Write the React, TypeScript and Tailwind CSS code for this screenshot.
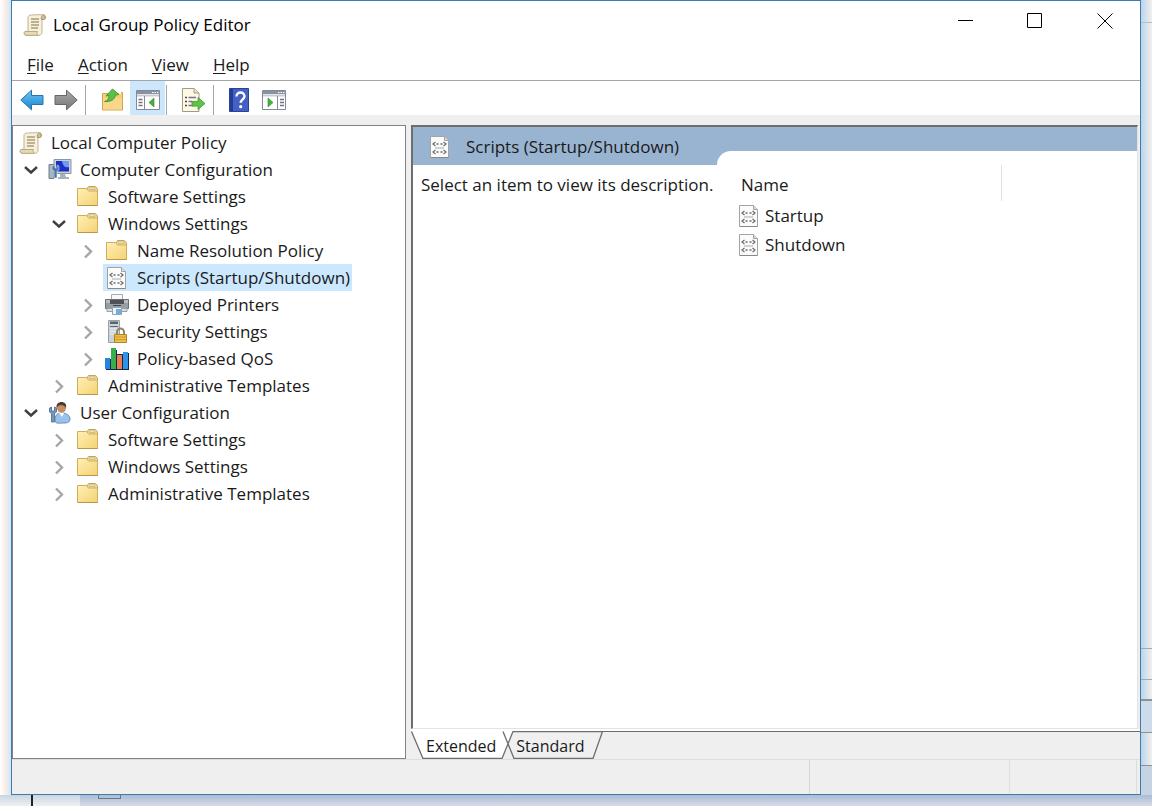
import React, { useState } from "react";

type IconName =
  | "scroll"
  | "computer"
  | "user"
  | "folder"
  | "script"
  | "printer"
  | "security"
  | "chart";

interface TreeItem {
  id: string;
  label: string;
  icon: IconName;
  level: number;
  open?: boolean;
}

const treeItems: TreeItem[] = [
  { id: "root", label: "Local Computer Policy", icon: "scroll", level: 0 },
  { id: "cc", label: "Computer Configuration", icon: "computer", level: 1, open: true },
  { id: "cc-soft", label: "Software Settings", icon: "folder", level: 2 },
  { id: "cc-win", label: "Windows Settings", icon: "folder", level: 2, open: true },
  { id: "cc-name", label: "Name Resolution Policy", icon: "folder", level: 3, open: false },
  { id: "cc-scripts", label: "Scripts (Startup/Shutdown)", icon: "script", level: 3 },
  { id: "cc-print", label: "Deployed Printers", icon: "printer", level: 3, open: false },
  { id: "cc-sec", label: "Security Settings", icon: "security", level: 3, open: false },
  { id: "cc-qos", label: "Policy-based QoS", icon: "chart", level: 3, open: false },
  { id: "cc-adm", label: "Administrative Templates", icon: "folder", level: 2, open: false },
  { id: "uc", label: "User Configuration", icon: "user", level: 1, open: true },
  { id: "uc-soft", label: "Software Settings", icon: "folder", level: 2, open: false },
  { id: "uc-win", label: "Windows Settings", icon: "folder", level: 2, open: false },
  { id: "uc-adm", label: "Administrative Templates", icon: "folder", level: 2, open: false },
];

const indents = ["pl-1", "pl-[10px]", "pl-[38px]", "pl-[67px]"];

const ScrollIcon = () => (
  <svg width="24" height="24" viewBox="0 0 24 24">
    <path d="M6 2.500c1-.8 14-1 15.500-.5 1.500.7 1.500 3 .3 4H19v13c0 2-1 3-3 3.300H3c-2-.3-2.300-3-.8-4H5V5c0-1 .2-2 1-2.500z" fill="#f6f0dc" stroke="#c2b592" />
    <path d="M2 18.500h12.500c-.8 1.500-.5 3 .8 3.800H3c-2-.3-2.300-2.800-1-3.800z" fill="#e6dab4" stroke="#b9aa82" />
    <path d="M18.500 6.500c-.8-2 .2-4.500 2-4.500s2 3.500.8 4.500z" fill="#d3c196" stroke="#a8966a" />
    <path d="M8 6h8M8 9h8M8 12h8M8 15h7" stroke="#a99c78" strokeWidth="1.300" />
  </svg>
);

const FolderIcon = () => (
  <svg width="24" height="24" viewBox="0 0 24 24">
    <defs>
      <linearGradient id="folderFill" x1="0" y1="0" x2="1" y2="1">
        <stop offset="0" stopColor="#fff0b4" />
        <stop offset="1" stopColor="#f5d274" />
      </linearGradient>
    </defs>
    <path d="M10.500 4.500 12.500 1.500h7l2 2.500v16h-11z" fill="#f3dc98" stroke="#c3a55c" />
    <path d="M13.500 3h5.500v1.500h-5.500z" fill="#fffdf2" stroke="#b79f66" strokeWidth=".6" />
    <path d="M1.500 3.500h9l2 2.500h9v14.500h-20z" fill="url(#folderFill)" stroke="#cfae5d" />
    <path d="M2 20.500h19.500" stroke="#b8964a" />
  </svg>
);

const ScriptIcon = () => (
  <svg width="24" height="24" viewBox="0 0 24 24">
    <path d="M2.500 1.500h14l4 4v17h-18z" fill="#fbfbfb" stroke="#a3a3a3" />
    <path d="M16.500 1.500v4h4" fill="#ddd" stroke="#a3a3a3" />
    <path d="M3 22.500h17.500" stroke="#888" />
    <path d="M7.500 7 5 9l2.500 2M15.500 7 18 9l-2.500 2M7.500 15 5 17l2.500 2M15.500 15l2.500 2-2.500 2" fill="none" stroke="#6b6b6b" strokeWidth="1.200" />
    <path d="M8.500 9h2m2 0h2M8.500 17h2m2 0h2" stroke="#6b6b6b" strokeWidth="1.300" />
    <path d="M7 13h9" stroke="#a9a9a9" />
  </svg>
);

const ComputerIcon = () => (
  <svg width="24" height="24" viewBox="0 0 24 24">
    <path d="M6 1.500h17v14H6z" fill="#c9d0d6" stroke="#8d979f" />
    <path d="M8 3h13v10.500H8z" fill="#1b2fc4" />
    <path d="M14 3h7v6c-3 1-6 0-7-6z" fill="#6d9bf0" />
    <path d="M12 16h5l1 3h3v2H10v-2h2z" fill="#aab2b8" />
    <path d="M1 6.500h5v14H1z" fill="#a8b4bf" stroke="#6f7e8b" />
    <path d="M4 8v4l2 1v7h3v-7l2-1V8L9 7v3H7V7z" fill="#4a76ad" stroke="#dae6f2" strokeWidth=".6" />
  </svg>
);

const UserIcon = () => (
  <svg width="24" height="24" viewBox="0 0 24 24">
    <path d="M7 20c0-6 2-8 7-8s8 3 8 6-2 4-6 4-9 1-9-2z" fill="#9cc1ea" stroke="#6490bf" />
    <path d="m11 12 3 4 2-4z" fill="#fff" />
    <circle cx="13.500" cy="7" r="4.500" fill="#c58d60" />
    <path d="M8.500 7c-.5-4 2-6 5-6s5.500 2 4.500 6c-1-2-3-3-5-3-2 0-3 1-4.500 3z" fill="#4c3b30" />
    <path d="M1.500 7v4l2 1.500V21h3v-8.500l2-1.500V7l-2-1v4h-3V6z" fill="#7896b8" stroke="#496a91" strokeWidth=".8" />
  </svg>
);

const PrinterIcon = () => (
  <svg width="24" height="24" viewBox="0 0 24 24">
    <path d="M6.500 1.500h11v6h-11z" fill="#f6f8f9" stroke="#a9aeb2" />
    <path d="M.5 6.500h23v9H.5z" fill="#999ea2" stroke="#6b7074" />
    <path d="M1 7h22v3H1z" fill="#b8bcbf" />
    <path d="M5 7h14v4H5z" fill="#4d5357" />
    <path d="M2 15.500h20v3H2z" fill="#dcdfe1" stroke="#9ba0a4" />
    <path d="M7.500 14.500h9v7h-9z" fill="#eef6fc" stroke="#8fa5b5" />
    <path d="M11 16h5v5h-5z" fill="#6fb0d8" />
    <path d="M8 12.500h8" stroke="#3f4549" />
  </svg>
);

const SecurityIcon = () => (
  <svg width="24" height="24" viewBox="0 0 24 24">
    <path d="M3.500.5h11v22h-11z" fill="#ccd3d8" stroke="#98a1a8" />
    <path d="M5 1.500h8V4H5z" fill="#59656e" />
    <path d="M5 6.500h8" stroke="#5c6870" />
    <path d="M5 9h8M5 11.500h8M5 14h4" stroke="#eef1f3" strokeWidth="1.200" />
    <path d="M12 15v-3a3.500 3.500 0 0 1 7 0v3" fill="none" stroke="#8d8568" strokeWidth="2" />
    <path d="M9.500 14.500h12v8h-12z" fill="#f0bf45" stroke="#b08526" />
    <path d="M10 17h11M10 19.500h11" stroke="#cf9a30" />
  </svg>
);

const ChartIcon = () => (
  <svg width="24" height="24" viewBox="0 0 24 24">
    <path d="M1 12h5v11H1zM6 3h6v20H6zM12 7h6v16h-6zM18 6h6v17h-6z" fill="#14284a" />
    <path d="M0 11h5v11H0z" fill="#2484e0" />
    <path d="M6 1h5v21H6z" fill="#35ae4b" />
    <path d="M12 8h5v14h-5z" fill="#f07a50" />
    <path d="M18 5h5v17h-5z" fill="#2f93e8" />
  </svg>
);

const itemIcons: Record<IconName, React.FC> = {
  scroll: ScrollIcon,
  computer: ComputerIcon,
  user: UserIcon,
  folder: FolderIcon,
  script: ScriptIcon,
  printer: PrinterIcon,
  security: SecurityIcon,
  chart: ChartIcon,
};

const BackIcon = () => (
  <svg width="24" height="22" viewBox="0 0 24 22">
    <defs>
      <linearGradient id="backFill" x1="0" y1="0" x2="0" y2="1">
        <stop offset="0" stopColor="#6cc6f5" />
        <stop offset="1" stopColor="#1c83cd" />
      </linearGradient>
    </defs>
    <path d="M.8 11 11.500 1.200V6.500H23v9H11.500v5.300z" fill="url(#backFill)" stroke="#2673ad" />
  </svg>
);

const ForwardIcon = () => (
  <svg width="24" height="22" viewBox="0 0 24 22">
    <defs>
      <linearGradient id="forwardFill" x1="0" y1="0" x2="0" y2="1">
        <stop offset="0" stopColor="#a9a9a9" />
        <stop offset="1" stopColor="#777" />
      </linearGradient>
    </defs>
    <path d="M23.200 11 12.500 1.200V6.500H1v9h11.500v5.300z" fill="url(#forwardFill)" stroke="#666" />
  </svg>
);

const UpFolderIcon = () => (
  <svg width="24" height="24" viewBox="0 0 24 24">
    <path d="M1.500 5.500h8l3-1h9v17.500h-20z" fill="#f3cd78" stroke="#cfa650" />
    <path d="M14 4h6v2h-6z" fill="#fff8e0" />
    <path d="M2 10h19v11.500H2z" fill="#f8d68a" />
    <path d="M3.500 13.500C7 12.500 8 10 8 7.500L5 8l6.500-7L18 6.500l-3.500.5c-1 5-5 7-11 6.500z" fill="#5cc043" stroke="#338f2c" strokeWidth=".8" />
  </svg>
);

const PanelIcon = ({ flip = false }: { flip?: boolean }) => (
  <svg width="24" height="22" viewBox="0 0 24 22">
    <path d="M.5 1.500h23v19H.5z" fill="#fff" stroke="#838996" />
    <path d="M1 2h22v3H1z" fill="#8a92a1" />
    <path d="M16 3.500h1.500m1 0H20m1 0h1.500" stroke="#fff" />
    <path d="M1 6.500h22" stroke="#c6cad2" strokeWidth="2" />
    {flip ? (
      <>
        <path d="M15.500 7v13" stroke="#838996" />
        <path d="M18 10.500h4M18 13.500h4M18 16.500h4" stroke="#6d7483" strokeWidth="1.500" />
        <path d="m6 9 5 4.500L6 18z" fill="#45b13c" stroke="#2b8b2a" strokeWidth=".6" />
      </>
    ) : (
      <>
        <path d="M8.500 7v13" stroke="#838996" />
        <path d="M2.500 10.500h4M2.500 13.500h4M2.500 16.500h4" stroke="#6d7483" strokeWidth="1.500" />
        <path d="m18 9-5 4.500 5 4.500z" fill="#45b13c" stroke="#2b8b2a" strokeWidth=".6" />
      </>
    )}
  </svg>
);

const ExportIcon = () => (
  <svg width="26" height="24" viewBox="0 0 26 24">
    <path d="M2.500.5H14l5 4.500v18.500H2.500z" fill="#fdf9e6" stroke="#a29c86" />
    <path d="M14 .5V5h5" fill="#e6dfc5" stroke="#a29c86" />
    <path d="M5 9.500h2M5 13.500h2M5 17.500h2" stroke="#444" strokeWidth="1.500" />
    <path d="M8.500 9.500H16M8.500 13.500H12M8.500 17.500H16" stroke="#77728c" strokeWidth="1.300" />
    <path d="M12 13.500h6V9.500l7 6-7 6v-3.500h-6z" fill="#5fc548" stroke="#3a9a2c" strokeWidth=".8" />
  </svg>
);

const HelpIcon = () => (
  <svg width="20" height="24" viewBox="0 0 20 24">
    <path d="M.5.5h19v23H.5z" fill="#4560c4" stroke="#2a4299" />
    <path d="M1 1h3v22H1z" fill="#233c96" />
    <path d="M7.500 8.500c0-2.500 1.800-4 4-4s4 1.500 4 3.800c0 3-3.800 3.200-3.800 6.500" fill="none" stroke="#fff" strokeWidth="2.400" />
    <circle cx="11.700" cy="18.700" r="1.600" fill="#fff" />
  </svg>
);

const Chevron = ({ open }: { open: boolean }) => (
  <svg width="16" height="16" viewBox="0 0 16 16" fill="none">
    {open ? (
      <path d="m2 5 6 5.500L14 5" stroke="#404040" strokeWidth="2.400" />
    ) : (
      <path d="m5 2.500 6 6-6 6" stroke="#a6a6a6" strokeWidth="2.400" />
    )}
  </svg>
);

const menus = ["File", "Action", "View", "Help"];
const scripts = ["Startup", "Shutdown"];

const App: React.FC = () => {
  const [selected, setSelected] = useState("cc-scripts");
  const [tab, setTab] = useState("Extended");

  return (
    <div className="flex min-h-screen flex-col bg-[#d5dce7] font-['Open_Sans','Noto_Sans',sans-serif] text-[17px] leading-6 text-[#1a1a1a]">
      <div className="flex flex-1">
        <div className="w-[11px] bg-linear-to-r from-white via-[#f8eee9] to-[#cfe6f6]" />

        <div className="flex min-w-0 flex-1 flex-col border border-[#3f7cac] bg-[#efefef]">
          <header className="flex h-12 items-center bg-white pl-[11px]">
            <ScrollIcon />
            <h1 className="ml-[6px] flex-1 text-black">Local Group Policy Editor</h1>
            <div className="flex self-start">
              <button aria-label="Minimize" className="flex h-[39px] w-[70px] items-center justify-center">
                <svg width="16" height="16" viewBox="0 0 16 16"><path d="M1 7.500h15" stroke="#000" /></svg>
              </button>
              <button aria-label="Maximize" className="flex h-[39px] w-[70px] items-center justify-center">
                <svg width="16" height="16" viewBox="0 0 16 16"><path d="M.5.5h14v14H.5z" fill="none" stroke="#000" /></svg>
              </button>
              <button aria-label="Close" className="flex h-[39px] w-[70px] items-center justify-center">
                <svg width="16" height="16" viewBox="0 0 16 16"><path d="m.5.500 15 15m0-15-15 15" stroke="#000" /></svg>
              </button>
            </div>
          </header>

          <nav className="flex h-8 items-center gap-6 border-b border-[#a5a5a5] bg-white pl-[15px]">
            {menus.map((menu) => (
              <button key={menu}>
                <span className="underline underline-offset-2">{menu[0]}</span>
                {menu.slice(1)}
              </button>
            ))}
          </nav>

          <div className="flex h-[34px] items-center bg-white pt-1 pl-2">
            <button aria-label="Back"><BackIcon /></button>
            <button aria-label="Forward" className="ml-[10px]"><ForwardIcon /></button>
            <span className="mx-[7px] h-[30px] w-px bg-[#a8a8a8]" />
            <button aria-label="Up one level" className="ml-2"><UpFolderIcon /></button>
            <button aria-label="Show console tree" className="-mt-1 ml-[5px] flex h-[34px] w-[35px] items-center justify-center bg-[#cce6fb] pt-1">
              <PanelIcon />
            </button>
            <span className="ml-px h-[30px] w-px bg-[#a8a8a8]" />
            <button aria-label="Export list" className="ml-[13px]"><ExportIcon /></button>
            <span className="ml-[7px] h-[30px] w-px bg-[#a8a8a8]" />
            <button aria-label="Help" className="ml-[15px]"><HelpIcon /></button>
            <button aria-label="Show action pane" className="ml-[13px]"><PanelIcon flip /></button>
          </div>

          <div className="flex flex-1 gap-[5px] pt-[10px]">
            <ul className="w-[394px] shrink-0 border border-[#828282] bg-white pt-[3px]">
              {treeItems.map((item) => {
                const Icon = itemIcons[item.icon];
                return (
                  <li key={item.id} className={`flex h-[27px] items-center ${indents[item.level]}`}>
                    {item.level > 0 && (
                      <span className="mr-[7px] flex w-4">
                        {item.open !== undefined && (
                          <button aria-label={`Toggle ${item.label}`} aria-expanded={item.open}>
                            <Chevron open={item.open} />
                          </button>
                        )}
                      </span>
                    )}
                    <button
                      onClick={() => setSelected(item.id)}
                      className={`flex h-[27px] items-center gap-2 px-[2px] whitespace-nowrap ${
                        selected === item.id ? "bg-[#cce8ff]" : ""
                      }`}
                    >
                      <Icon />
                      {item.label}
                    </button>
                  </li>
                );
              })}
            </ul>

            <main className="flex min-w-0 flex-1 flex-col">
              <div className="mr-[2px] flex flex-1 border-t-2 border-r border-b border-l-2 border-t-[#6d6d6d] border-r-[#e3e3e3] border-b-[#e3e3e3] border-l-[#6d6d6d] bg-white">
                <section className="w-[304px] shrink-0">
                  <h2 className="flex h-[38px] items-center gap-[14px] bg-[#99b4d1] pt-[2px] pl-[15px] whitespace-nowrap">
                    <ScriptIcon />
                    Scripts (Startup/Shutdown)
                  </h2>
                  <p className="pt-2 pl-2 whitespace-nowrap">Select an item to view its description.</p>
                </section>
                <section className="flex min-w-0 flex-1 flex-col bg-[#99b4d1] pt-6">
                  <div className="flex-1 rounded-tl-[14px] bg-white pt-[14px] pl-5">
                    <table className="w-[265px] text-left">
                      <thead>
                        <tr>
                          <th className="h-9 border-r border-[#e2e2e2] pt-1 pl-1 font-normal">Name</th>
                        </tr>
                      </thead>
                      <tbody>
                        {scripts.map((name) => (
                          <tr key={name}>
                            <td className="h-[29px]">
                              <button className="flex items-center gap-1">
                                <ScriptIcon />
                                {name}
                              </button>
                            </td>
                          </tr>
                        ))}
                      </tbody>
                    </table>
                  </div>
                </section>
              </div>

              <div className="h-[2px] bg-white" />
              <div className="relative flex h-7 items-start">
                <svg className="absolute top-0 left-0" width="192" height="28" viewBox="0 0 192 28">
                  <path d="M.5 0 12 27.500h79L102 .5V0z" fill="#fff" />
                  <path d="M97 14 102 .5h89L182 27.500h-79z" fill="#f0f0f0" />
                  <path d="M.5.500 12 27.500h79L102 .5h90M92 .5 103 27.500h79L191.500.500" fill="none" stroke="#6d6d6d" strokeWidth="1.300" />
                </svg>
                <div className="relative flex w-[192px] shrink-0 gap-5 pt-[3px] pl-[15px] text-[16px]">
                  {["Extended", "Standard"].map((name) => (
                    <button key={name} aria-pressed={tab === name} onClick={() => setTab(name)}>
                      {name}
                    </button>
                  ))}
                </div>
                <span className="h-px flex-1 bg-[#6d6d6d]" />
              </div>
            </main>
          </div>

          <footer className="flex h-[35px] border-t border-[#dedede]">
            <div className="flex-1 border-r border-[#d5d5d5]" />
            <div className="w-[200px] border-r border-[#e0e0e0]" />
            <div className="mr-[3px] w-[127px] border-r border-[#dcdcdc]" />
          </footer>
        </div>

        <div className="flex w-[11px] flex-col bg-linear-to-r from-[#b9d5ec] to-[#f3efec]">
          <div className="h-[23px] border-b border-[#b9bec4]" />
          <div className="flex-1" />
          <div className="h-8 border-y border-[#a5a9ae]" />
          <div className="h-[21px] border-b-2 border-[#8d9298]" />
          <div className="h-8 border-b border-[#8d9298] bg-[#cddbea]" />
          <div className="h-[33px] border-b border-[#8d9298]" />
          <div className="h-[29px] bg-[#c6d3e2]" />
        </div>
      </div>

      <div className="flex h-[11px] bg-linear-to-b from-[#a9bdd5] to-[#d5dce7]">
        <div className="w-20 bg-linear-to-b from-[#c8d6e2] to-[#f0f0f0] pl-[31px]">
          <div className="h-full w-[2px] bg-[#222]" />
        </div>
        <div className="ml-[18px] h-1 w-[23px] border-x border-b border-[#6b7782]" />
      </div>
    </div>
  );
};

export default App;
